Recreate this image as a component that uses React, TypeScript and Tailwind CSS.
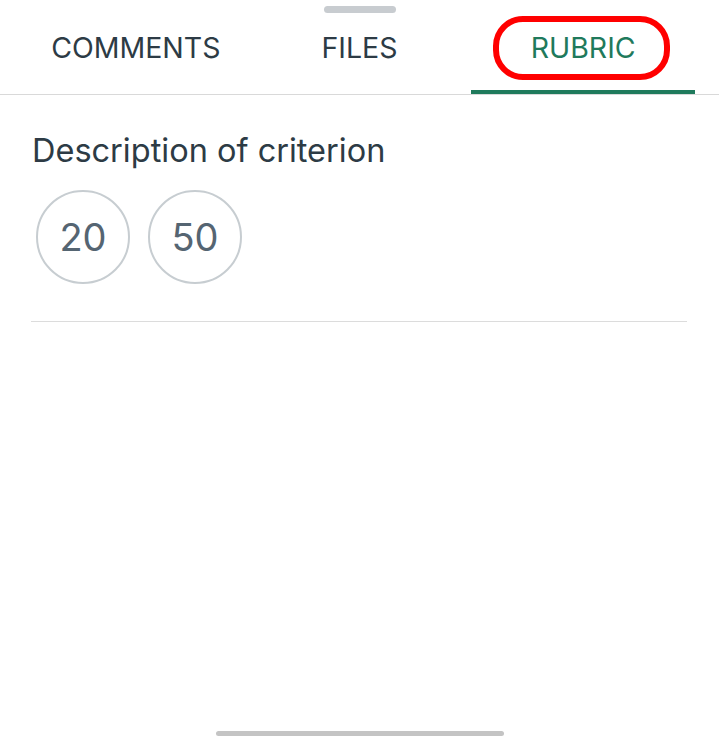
import React, { useState } from "react";

const tabs = ["COMMENTS", "FILES", "RUBRIC"];
const points = [20, 50];

const App: React.FC = () => {
  const [active, setActive] = useState("RUBRIC");

  return (
    <div
      className="relative flex h-[738px] w-[719px] flex-col overflow-hidden bg-white"
      style={{ fontFamily: "Inter, 'Noto Sans', sans-serif" }}
    >
      {/* Drag handle */}
      <div className="mx-auto mt-[6px] h-[7px] w-[72px] rounded-full bg-[#c8ccd0]" />

      {/* Tabs */}
      <div className="flex h-[82px] border-b border-[#d9d9d9] px-6">
        {tabs.map((tab) => (
          <button
            key={tab}
            onClick={() => setActive(tab)}
            className={`relative flex flex-1 items-center justify-center border-b-4 pb-[6px] text-[28.5px] ${
              active === tab
                ? "border-[#1f7a5c] text-[#1f7a5c]"
                : "border-transparent text-[#2d3b45]"
            }`}
          >
            {tab}
            {tab === "RUBRIC" && (
              <span className="pointer-events-none absolute left-[22px] top-[3px] h-[64px] w-[177px] rounded-[30px] border-[6px] border-[#ff0000]" />
            )}
          </button>
        ))}
      </div>

      {/* Criterion */}
      <div className="px-8 pt-[35px]">
        <h2 className="text-[32.5px] leading-[42px] text-[#2d3b45]">
          Description of criterion
        </h2>
        <div className="mt-[18px] flex gap-[18px] pl-[4px]">
          {points.map((p) => (
            <div
              key={p}
              className="flex h-[94px] w-[94px] items-center justify-center rounded-full border-2 border-[#c7cdd1] text-[38px] text-[#556572]"
            >
              {p}
            </div>
          ))}
        </div>
        <div className="mt-[37px] h-px w-[656px] -ml-[1px] bg-[#dcdcdc]" />
      </div>

      {/* Home indicator */}
      <div className="mx-auto mb-[2px] mt-auto h-[5px] w-[288px] rounded-full bg-[#c4c4c4]" />
    </div>
  );
};

export default App;
